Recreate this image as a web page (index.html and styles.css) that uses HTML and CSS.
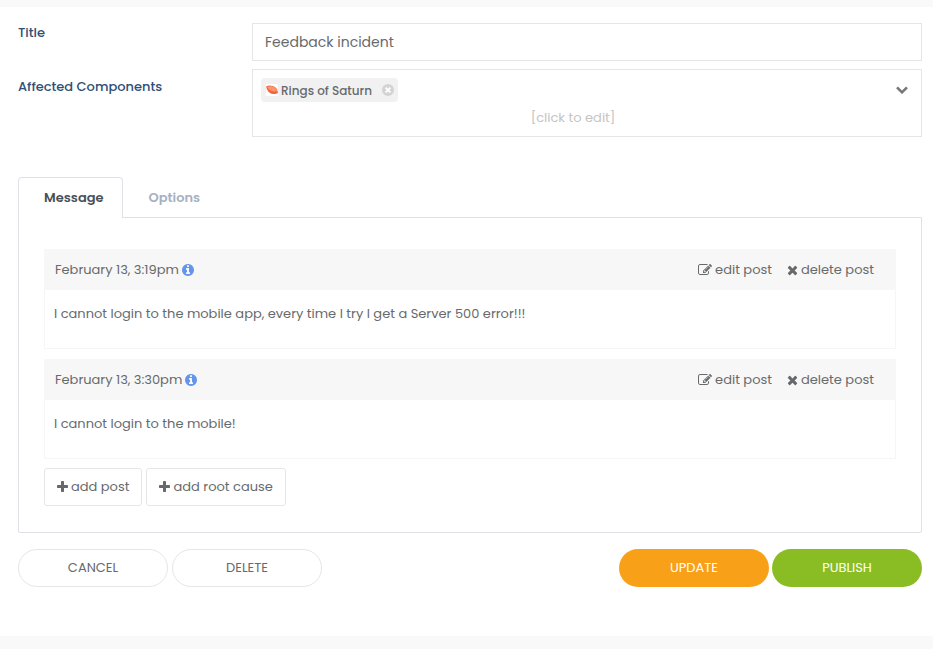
FILE: index.html
```html
<!DOCTYPE html>
<html lang="en">
<head>
<meta charset="utf-8">
<meta name="viewport" content="width=device-width, initial-scale=1">
<title>Feedback incident</title>
<link rel="stylesheet" href="styles.css">
</head>
<body>
<svg class="sprite" aria-hidden="true">
  <symbol id="edit" viewBox="0 0 1792 1792"><path d="M888 1184l116-116-152-152-116 116v56h96v96h56zm440-720q-16-16-33 1l-350 350q-17 17-1 33t33-1l350-350q17-17 1-33zm80 594v190q0 119-84.5 203.5t-203.5 84.5h-832q-119 0-203.5-84.5t-84.5-203.5v-832q0-119 84.5-203.5t203.5-84.5h832q63 0 117 25 15 7 18 23 3 17-9 29l-49 49q-14 14-32 8-23-6-45-6h-832q-66 0-113 47t-47 113v832q0 66 47 113t113 47h832q66 0 113-47t47-113v-126q0-13 9-22l64-64q15-15 35-7t20 29zm-96-738l288 288-672 672h-288v-288zm444 132l-92 92-288-288 92-92q28-28 68-28t68 28l152 152q28 28 28 68t-28 68z"/></symbol>
  <symbol id="times" viewBox="192 128 1408 1536"><path d="M1490 1322q0 40-28 68l-136 136q-28 28-68 28t-68-28l-294-294-294 294q-28 28-68 28t-68-28l-136-136q-28-28-28-68t28-68l294-294-294-294q-28-28-28-68t28-68l136-136q28-28 68-28t68 28l294 294 294-294q28-28 68-28t68 28l136 136q28 28 28 68t-28 68l-294 294 294 294q28 28 28 68z"/></symbol>
  <symbol id="plus" viewBox="192 128 1408 1536"><path d="M1600 736v192q0 40-28 68t-68 28h-416v416q0 40-28 68t-68 28h-192q-40 0-68-28t-28-68v-416h-416q-40 0-68-28t-28-68v-192q0-40 28-68t68-28h416v-416q0-40 28-68t68-28h192q40 0 68 28t28 68v416h416q40 0 68 28t28 68z"/></symbol>
  <symbol id="info" viewBox="128 128 1536 1536"><path d="M1152 1376v-160q0-14-9-23t-23-9h-96v-512q0-14-9-23t-23-9h-320q-14 0-23 9t-9 23v160q0 14 9 23t23 9h96v320h-96q-14 0-23 9t-9 23v160q0 14 9 23t23 9h448q14 0 23-9t9-23zm-128-896v-160q0-14-9-23t-23-9h-192q-14 0-23 9t-9 23v160q0 14 9 23t23 9h192q14 0 23-9t9-23zm640 416q0 209-103 385.5t-279.5 279.5-385.5 103-385.5-103-279.5-279.5-103-385.5 103-385.5 279.5-279.5 385.5-103 385.5 103 279.5 279.5 103 385.5z"/></symbol>
</svg>

<form class="page">
  <div class="field">
    <label class="field-label" for="title">Title</label>
    <input class="title-input" id="title" type="text" value="Feedback incident">
  </div>

  <div class="field">
    <span class="field-label" id="components-label">Affected Components</span>
    <div class="components" role="group" aria-labelledby="components-label">
      <div class="components-row">
        <span class="tag">
          <svg class="tag-image" viewBox="0 0 12 12" aria-hidden="true">
            <rect width="12" height="12" fill="#fff"/>
            <path d="M.2 2.200C2.500.8 7.400 1.200 9.600 3.400c1.500 1.500 2.500 3.800 2.200 5.600C9.800 10.500 5.600 10.300 3.300 8.400 1.600 7 .2 4.300.2 2.200z" fill="#f5653c"/>
            <path d="M1.200 2.800C4 1.700 7.600 2.200 9.300 4.200c1 1.100 1.500 2.200 1.600 3.100C8.400 7.500 5.600 7.300 3.800 6 2.500 5.100 1.500 3.900 1.200 2.800z" fill="#ffa184"/>
            <path d="M1.500 2.900l8.600 3.900M3.900 2.500l6.400 3M1.800 4.100l5.600 2.800" stroke="#ff7e59" stroke-width=".6"/>
          </svg>
          <span class="tag-text">Rings of Saturn</span>
          <button class="icon-button" type="button" aria-label="Remove Rings of Saturn">
            <svg class="tag-remove" viewBox="0 0 12 12" aria-hidden="true"><circle cx="6" cy="6" r="6" fill="#d3d3d3"/><path d="M3.600 3.600l4.800 4.800M8.400 3.600L3.600 8.400" stroke="#fff" stroke-width="2"/></svg>
          </button>
        </span>
        <button class="icon-button" type="button" aria-label="Show components" aria-haspopup="listbox">
          <svg class="chevron" viewBox="0 0 12 8" aria-hidden="true"><path d="M1 1.300l5 5 5-5" fill="none" stroke="#777" stroke-width="2.600"/></svg>
        </button>
      </div>
      <button class="edit-hint" type="button">[click to edit]</button>
    </div>
  </div>

  <div class="tabs" role="tablist">
    <button class="tab tab-active" type="button" role="tab" aria-selected="true">Message</button>
    <button class="tab" type="button" role="tab" aria-selected="false">Options</button>
  </div>

  <section class="panel" role="tabpanel">
    <div class="posts">
      <article class="post">
        <header class="post-header">
          <span class="post-date">February 13, 3:19pm <svg class="icon info" aria-hidden="true"><use href="#info"/></svg></span>
          <span class="post-actions">
            <a class="post-link" href="#"><svg class="icon wide" aria-hidden="true"><use href="#edit"/></svg>edit post</a>
            <a class="post-link" href="#"><svg class="icon" aria-hidden="true"><use href="#times"/></svg>delete post</a>
          </span>
        </header>
        <p class="post-body">I cannot login to the mobile app, every time I try I get a Server 500 error!!!</p>
      </article>
      <article class="post">
        <header class="post-header">
          <span class="post-date">February 13, 3:30pm <svg class="icon info" aria-hidden="true"><use href="#info"/></svg></span>
          <span class="post-actions">
            <a class="post-link" href="#"><svg class="icon wide" aria-hidden="true"><use href="#edit"/></svg>edit post</a>
            <a class="post-link" href="#"><svg class="icon" aria-hidden="true"><use href="#times"/></svg>delete post</a>
          </span>
        </header>
        <p class="post-body">I cannot login to the mobile!</p>
      </article>
    </div>
    <div class="add-row">
      <button class="add" type="button"><svg class="icon" aria-hidden="true"><use href="#plus"/></svg>add post</button>
      <button class="add" type="button"><svg class="icon" aria-hidden="true"><use href="#plus"/></svg>add root cause</button>
    </div>
  </section>

  <div class="actions">
    <div class="action-group">
      <button class="pill" type="button">CANCEL</button>
      <button class="pill" type="button">DELETE</button>
    </div>
    <div class="action-group save-group">
      <button class="pill update" type="submit">UPDATE</button>
      <button class="pill publish" type="submit">PUBLISH</button>
    </div>
  </div>
</form>
</body>
</html>
```
FILE: styles.css
```css
* { box-sizing: border-box; }

body {
  margin: 0;
  padding: 7px 0 13px;
  background: #f9f9f9;
  color: #676a6c;
  font: 13px/20px Poppins, Inter, "Open Sans", sans-serif;
}

button, input { font: inherit; color: inherit; }
button { cursor: pointer; }
.sprite { display: none; }

.page {
  padding: 16px 11px 49px 18px;
  background: #fff;
}

.field {
  display: grid;
  grid-template-columns: 234px 1fr;
  margin-bottom: 8px;
}
.field-label {
  color: #2f4f76;
  font-weight: 500;
}
.field + .field .field-label { padding-top: 8px; }

.title-input {
  width: 100%;
  height: 38px;
  padding: 0 12px;
  border: 1px solid #e5e6e7;
  border-radius: 0;
  background: #fff;
  font-size: 14px;
}

.components {
  display: flex;
  flex-direction: column;
  height: 68px;
  padding: 8px;
  border: 1px solid #e5e6e7;
}
.components-row {
  display: flex;
  align-items: center;
  justify-content: space-between;
  padding-right: 5px;
}
.tag {
  display: flex;
  align-items: center;
  height: 24px;
  padding: 0 4px 0 5px;
  border-radius: 4px;
  background: #f1f1f1;
  font-weight: 500;
}
.tag-image { width: 12px; height: 12px; margin-right: 3px; }
.tag-text { margin-right: 10px; padding-top: 1px; font-size: 12px; }
.tag-remove { display: block; width: 12px; height: 12px; }
.icon-button { padding: 0; border: 0; background: none; }
.chevron { display: block; width: 12px; height: 8px; }
.edit-hint {
  align-self: center;
  margin: 6px 28px 0 0;
  padding: 0;
  border: 0;
  background: none;
  color: #c4c4c4;
}

.tabs { display: flex; margin-top: 40px; }
.tab {
  height: 41px;
  padding: 0 18px 0 25px;
  border: 1px solid transparent;
  border-bottom: 0;
  background: none;
  color: #a7b1c2;
  font-weight: 600;
}
.tab-active {
  position: relative;
  border-color: #dee2e6;
  border-radius: 4px 4px 0 0;
  background: #fff;
  color: #495057;
}

.panel {
  margin-top: -1px;
  padding: 31px 25px 26px;
  border: 1px solid #dee2e6;
  border-radius: 0 0 2px 2px;
}
.posts {
  display: grid;
  gap: 10px;
  margin-bottom: 9px;
}
.post-header {
  display: flex;
  align-items: center;
  justify-content: space-between;
  height: 41px;
  padding: 0 22px 0 11px;
  background: #f7f7f7;
}
.post-date, .post-link { display: flex; align-items: center; }
.post-actions { display: flex; gap: 15px; }
.post-link { color: inherit; text-decoration: none; }
.post-body {
  height: 59px;
  margin: 0;
  padding: 14px 9px;
  border: 1px solid #f6f6f6;
  border-top: 0;
}
.icon {
  flex: none;
  width: 11px;
  height: 12px;
  margin-right: 3px;
  fill: currentColor;
}
.icon.wide { width: 14px; height: 14px; }
.icon.info { width: 12px; margin: 0 0 0 3px; fill: #6495ed; }

.add-row { display: flex; gap: 4px; }
.add {
  display: flex;
  align-items: center;
  height: 38px;
  padding: 0 12px;
  border: 1px solid #e5e6e7;
  border-radius: 3px;
  background: #fff;
}

.actions {
  display: flex;
  justify-content: space-between;
  margin-top: 16px;
}
.action-group { display: flex; gap: 4px; }
.save-group { gap: 3px; }
.pill {
  width: 150px;
  height: 38px;
  padding: 0;
  border: 1px solid #e5e6e7;
  border-radius: 19px;
  background: #fff;
}
.update, .publish { border: 0; color: #fff; }
.update { background: #f8a018; }
.publish { background: #8abd24; }
```
